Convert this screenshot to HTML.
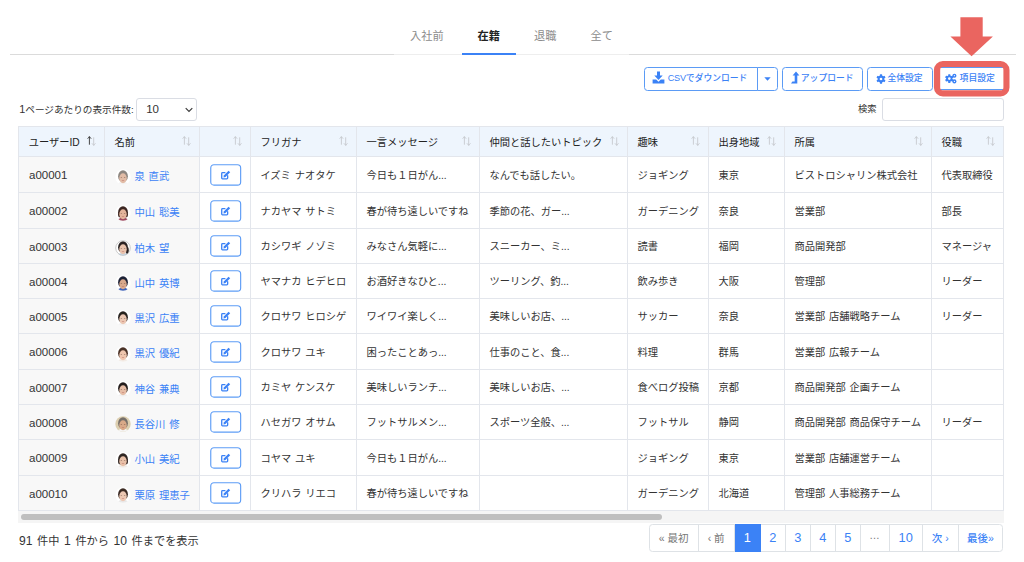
<!DOCTYPE html>
<html lang="ja">
<head>
<meta charset="utf-8">
<title>ユーザー一覧</title>
<style>
*{box-sizing:border-box;margin:0;padding:0}
html,body{width:1024px;height:562px;overflow:hidden;background:#fff}
body{font-family:"Liberation Sans","Noto Sans CJK JP",sans-serif;color:#333;font-size:10.2px;position:relative}
.abs{position:absolute}
/* tabs */
.tabline{left:10px;top:54px;width:1006px;height:1px;background:#dbdbdb}
.tab{top:27px;height:18px;line-height:18px;font-size:11.2px;color:#8c8c8c;white-space:nowrap}
.tab.on{color:#222;font-weight:700}
.tabbar{left:461.5px;top:52.5px;width:54.5px;height:2px;background:#3b82f6}
/* buttons */
.btn{top:67px;height:23.5px;border:1.2px solid #5b9bf5;border-radius:3.5px;background:#fff;color:#3b82f6;font-size:8.8px;line-height:21.9px;white-space:nowrap;font-weight:500}
.btn svg{position:absolute}
.btn>span{position:absolute;top:0}
.btn .l{font-size:9.1px;letter-spacing:-0.2px}
/* length + search */
.len{left:19.3px;top:101.5px;font-size:9.65px;color:#333;line-height:15px;white-space:nowrap}
.sel{left:136px;top:98px;width:60.8px;height:23px;border:1px solid #dadde4;border-radius:3px;font-size:11.5px;line-height:20.6px;padding-left:9.2px;color:#333}
.search-l{left:858px;top:102px;font-size:9.3px;line-height:15px}
.search-i{left:882px;top:98.2px;width:122px;height:22.4px;border:1px solid #dadde4;border-radius:3px}
/* table */
table{position:absolute;left:18px;top:126px;border-collapse:collapse;table-layout:fixed;width:985.7px}
th,td{border:1px solid #e3e6ec;padding:0 0 0.4px 9.7px;text-align:left;font-weight:400;white-space:nowrap;overflow:hidden;font-size:10.25px;color:#333;background:#fff}
th{height:30px;background:#eef5fd;color:#222;position:relative;padding-bottom:0.4px}
td{word-spacing:1px}
td.g{background:#f8f8f8}
td.id{font-size:11.5px;padding-bottom:0;padding-top:1px;padding-left:10px}
td.n{padding-left:10px;color:#3b82f6;padding-bottom:0;padding-top:3.6px;font-size:10.35px}
td.e{padding-left:10.2px;padding-bottom:0;padding-top:1px}
.sort{position:absolute;right:7.7px;top:8.9px}
.sort path{stroke:#c6cace}
.sort.asc .u{stroke:#333}
.av{vertical-align:-4.5px;margin-right:3.7px;margin-left:0}
.eb{display:block;position:relative;left:-0.15px;top:0.2px}
/* footer */
.info b{font-weight:400;font-size:12.1px}
.scroll{left:18.3px;top:511.2px;width:985.4px;height:11.4px;background:#f5f5f5}
.thumb{left:21px;top:513.6px;width:641px;height:6.6px;border-radius:4px;background:#bfbfbf}
.info{left:19px;top:532.8px;font-size:11.2px;line-height:16px;color:#333;white-space:nowrap;word-spacing:1.5px}
.pg{left:648.6px;top:524px;height:28px;border:1px solid #dee2e6;border-radius:3.5px;display:flex;font-size:10.5px;line-height:26.6px;color:#3b82f6;background:#fff;font-weight:500}
.pg span{display:block;text-align:center;border-right:1px solid #dee2e6;height:26px;white-space:nowrap}
.pg span:last-child{border-right:0}
.pg .dis{color:#777;font-weight:400}
.pg .num{font-weight:400;font-size:12.8px;line-height:26.8px}
.pg .act{background:#3b82f6;color:#fff;margin:-1px 0;height:28px;line-height:28.8px;border-right-color:#3b82f6}
</style>
</head>
<body>
<!-- tabs -->
<div class="abs tabline"></div>
<div class="abs" style="left:394px;top:54px;width:235px;height:1px;background:#eeeeee"></div>
<div class="abs tab" style="left:410px">入社前</div>
<div class="abs tab on" style="left:477.5px">在籍</div>
<div class="abs tab" style="left:534px">退職</div>
<div class="abs tab" style="left:590.5px">全て</div>
<div class="abs tabbar"></div>

<!-- red arrow -->
<svg class="abs" style="left:950px;top:17px" width="43" height="40" viewBox="0 0 43 40"><path d="M10.4 0.2H32.7V19.4H42.9L21.6 39.2L0.4 19.4H10.4Z" fill="#ea6560"/></svg>

<!-- buttons -->
<div class="abs btn" style="left:644px;width:114px;border-radius:3.5px 0 0 3.5px">
<svg style="left:7.1px;top:3.4px" width="13" height="13" viewBox="0 0 13 13"><path d="M5 0.6H8V4.6H10.7L6.5 8.9L2.3 4.6H5Z" fill="#3b82f6"/><path d="M0.6 8.6H4.2L6.5 10.8L8.8 8.6H12.4V12.4H0.6Z" fill="#3b82f6"/></svg>
<span style="left:22.7px"><span class="l">CSV</span>でダウンロード</span></div>
<div class="abs btn" style="left:756.8px;width:21px;border-radius:0 3.5px 3.5px 0"><svg style="left:6.2px;top:8.6px" width="7" height="4" viewBox="0 0 7 4"><path d="M0.3 0.3H6.7L3.5 3.7Z" fill="#3b82f6"/></svg></div>
<div class="abs btn" style="left:781.8px;width:81.2px">
<svg style="left:7.1px;top:3.1px" width="10" height="13" viewBox="0 0 10 13"><path d="M6 0.4L9.4 4.4H7.3V12.4H1L2.4 10.6H4.7V4.4H2.6Z" fill="#3b82f6"/></svg>
<span style="left:18px">アップロード</span></div>
<div class="abs btn" style="left:866.9px;width:66px">
<svg style="left:7.9px;top:5.8px" width="10" height="10" viewBox="0 0 10 10"><g fill="#3b82f6"><circle cx="5" cy="5" r="3.4"/><rect x="3.9" y="0.3" width="2.2" height="9.4" rx="0.5"/><rect x="3.9" y="0.3" width="2.2" height="9.4" rx="0.5" transform="rotate(60 5 5)"/><rect x="3.9" y="0.3" width="2.2" height="9.4" rx="0.5" transform="rotate(120 5 5)"/></g><circle cx="5" cy="5" r="1.35" fill="#fff"/></svg>
<span style="left:19.5px">全体設定</span></div>
<div class="abs btn" style="left:938.4px;width:67px;border-radius:0;height:23.2px">
<svg style="left:5.7px;top:5.1px" width="13" height="11" viewBox="0 0 13 11"><g fill="#3b82f6"><circle cx="4.3" cy="5.6" r="3.1"/><rect x="3.2" y="1.3" width="2.2" height="8.6" rx="0.5"/><rect x="3.2" y="1.3" width="2.2" height="8.6" rx="0.5" transform="rotate(60 4.3 5.6)"/><rect x="3.2" y="1.3" width="2.2" height="8.6" rx="0.5" transform="rotate(120 4.3 5.6)"/><circle cx="9.4" cy="2.7" r="2.05"/><circle cx="9.4" cy="8.4" r="2.05"/></g><circle cx="4.3" cy="5.6" r="1.3" fill="#fff"/><circle cx="9.4" cy="2.7" r="0.6" fill="#fff"/><circle cx="9.4" cy="8.4" r="0.6" fill="#fff"/></svg>
<span style="left:20.2px">項目設定</span></div>
<!-- red highlight frame -->
<svg class="abs" style="left:930px;top:58px" width="84" height="42" viewBox="0 0 84 42"><path fill="#ea6560" fill-rule="evenodd" d="M12.90 3.10H70.50A9 9 0 0 1 79.50 12.10V29.50A9 9 0 0 1 70.50 38.50H12.90A9 9 0 0 1 3.90 29.50V12.10A9 9 0 0 1 12.90 3.10ZM13.00 9.10H70.60A2.8 2.8 0 0 1 73.40 11.90V29.40A2.8 2.8 0 0 1 70.60 32.20H13.00A2.8 2.8 0 0 1 10.20 29.40V11.90A2.8 2.8 0 0 1 13.00 9.10Z"/></svg>

<!-- length / search -->
<div class="abs len"><b style="font-weight:400;font-size:10.8px">1</b>ページあたりの表示件数:</div>
<div class="abs sel">10<svg class="abs" style="right:2.4px;top:7.6px" width="8" height="6" viewBox="0 0 8 6"><path d="M0.7 1.1L4 4.5L7.3 1.1" fill="none" stroke="#3a3a3a" stroke-width="1.15"/></svg></div>
<div class="abs search-l">検索</div>
<div class="abs search-i"></div>

<table>
<colgroup><col style="width:85.7px"><col style="width:95px"><col style="width:51px"><col style="width:106px"><col style="width:123px"><col style="width:148px"><col style="width:81px"><col style="width:76px"><col style="width:147px"><col style="width:72px"></colgroup>
<thead><tr>
<th>ユーザーID<svg class="sort asc" width="9" height="10" viewBox="0 0 9 10"><g fill="none" stroke-width="0.9" stroke-linecap="round" stroke-linejoin="round"><path class="u" d="M2.4 8.3V0.8M0.9 2.4L2.4 0.7L3.9 2.4"/><path class="d" d="M6.7 1.7V9.2M5.2 7.6L6.7 9.3L8.2 7.6"/></g></svg></th>
<th>名前<svg class="sort" width="9" height="10" viewBox="0 0 9 10"><g fill="none" stroke-width="0.9" stroke-linecap="round" stroke-linejoin="round"><path class="u" d="M2.4 8.3V0.8M0.9 2.4L2.4 0.7L3.9 2.4"/><path class="d" d="M6.7 1.7V9.2M5.2 7.6L6.7 9.3L8.2 7.6"/></g></svg></th>
<th><svg class="sort" width="9" height="10" viewBox="0 0 9 10"><g fill="none" stroke-width="0.9" stroke-linecap="round" stroke-linejoin="round"><path class="u" d="M2.4 8.3V0.8M0.9 2.4L2.4 0.7L3.9 2.4"/><path class="d" d="M6.7 1.7V9.2M5.2 7.6L6.7 9.3L8.2 7.6"/></g></svg></th>
<th>フリガナ<svg class="sort" width="9" height="10" viewBox="0 0 9 10"><g fill="none" stroke-width="0.9" stroke-linecap="round" stroke-linejoin="round"><path class="u" d="M2.4 8.3V0.8M0.9 2.4L2.4 0.7L3.9 2.4"/><path class="d" d="M6.7 1.7V9.2M5.2 7.6L6.7 9.3L8.2 7.6"/></g></svg></th>
<th>一言メッセージ<svg class="sort" width="9" height="10" viewBox="0 0 9 10"><g fill="none" stroke-width="0.9" stroke-linecap="round" stroke-linejoin="round"><path class="u" d="M2.4 8.3V0.8M0.9 2.4L2.4 0.7L3.9 2.4"/><path class="d" d="M6.7 1.7V9.2M5.2 7.6L6.7 9.3L8.2 7.6"/></g></svg></th>
<th>仲間と話したいトピック<svg class="sort" width="9" height="10" viewBox="0 0 9 10"><g fill="none" stroke-width="0.9" stroke-linecap="round" stroke-linejoin="round"><path class="u" d="M2.4 8.3V0.8M0.9 2.4L2.4 0.7L3.9 2.4"/><path class="d" d="M6.7 1.7V9.2M5.2 7.6L6.7 9.3L8.2 7.6"/></g></svg></th>
<th>趣味<svg class="sort" width="9" height="10" viewBox="0 0 9 10"><g fill="none" stroke-width="0.9" stroke-linecap="round" stroke-linejoin="round"><path class="u" d="M2.4 8.3V0.8M0.9 2.4L2.4 0.7L3.9 2.4"/><path class="d" d="M6.7 1.7V9.2M5.2 7.6L6.7 9.3L8.2 7.6"/></g></svg></th>
<th>出身地域<svg class="sort" width="9" height="10" viewBox="0 0 9 10"><g fill="none" stroke-width="0.9" stroke-linecap="round" stroke-linejoin="round"><path class="u" d="M2.4 8.3V0.8M0.9 2.4L2.4 0.7L3.9 2.4"/><path class="d" d="M6.7 1.7V9.2M5.2 7.6L6.7 9.3L8.2 7.6"/></g></svg></th>
<th>所属<svg class="sort" width="9" height="10" viewBox="0 0 9 10"><g fill="none" stroke-width="0.9" stroke-linecap="round" stroke-linejoin="round"><path class="u" d="M2.4 8.3V0.8M0.9 2.4L2.4 0.7L3.9 2.4"/><path class="d" d="M6.7 1.7V9.2M5.2 7.6L6.7 9.3L8.2 7.6"/></g></svg></th>
<th>役職<svg class="sort" width="9" height="10" viewBox="0 0 9 10"><g fill="none" stroke-width="0.9" stroke-linecap="round" stroke-linejoin="round"><path class="u" d="M2.4 8.3V0.8M0.9 2.4L2.4 0.7L3.9 2.4"/><path class="d" d="M6.7 1.7V9.2M5.2 7.6L6.7 9.3L8.2 7.6"/></g></svg></th>
</tr></thead>
<tbody>
<tr style="height:36px"><td class="g id">a00001</td><td class="g n"><svg class="av" width="16" height="16" viewBox="0 0 16 16"><defs><clipPath id="c0"><circle cx="8" cy="8" r="7.7"/></clipPath><filter id="f0" x="-20%" y="-20%" width="140%" height="140%"><feGaussianBlur stdDeviation="0.35"/></filter></defs><g clip-path="url(#c0)"><rect width="16" height="16" fill="#fff"/><g filter="url(#f0)"><ellipse cx="8" cy="16.6" rx="6.4" ry="3.8" fill="#f4f4f4"/><ellipse cx="8" cy="7.2" rx="4.9" ry="5.9" fill="#8d8680"/><ellipse cx="8" cy="9.2" rx="3.7" ry="5" fill="#e2bca6"/><ellipse cx="6.3" cy="8.6" rx="0.8" ry="0.45" fill="#5a3d33" opacity=".7"/><ellipse cx="9.7" cy="8.6" rx="0.8" ry="0.45" fill="#5a3d33" opacity=".7"/><ellipse cx="8" cy="11.7" rx="1.3" ry="0.4" fill="#b0605a" opacity=".7"/></g></g></svg>泉 直武</td><td class="e"><svg class="eb" width="32" height="23" viewBox="0 0 32 23"><rect x="0.75" y="0.75" width="29.9" height="20.4" rx="3.2" fill="#fff" stroke="#5e9df6" stroke-width="1.15"/><g transform="translate(10.4 5.9) scale(1.1)"><path d="M6.6 5.3V7.4Q6.6 8.1 5.9 8.1H1.9Q1.2 8.1 1.2 7.4V3.2Q1.2 2.5 1.9 2.5H4.1" fill="none" stroke="#3b82f6" stroke-width="1.2" stroke-linecap="round"/><path d="M2.8 6.8L3.1 5L7.4 0.7L8.9 2.2L4.6 6.5Z" fill="#3b82f6"/></g></svg></td><td>イズミ ナオタケ</td><td>今日も１日がん...</td><td>なんでも話したい。</td><td>ジョギング</td><td>東京</td><td>ビストロシャリン株式会社</td><td>代表取締役</td></tr>
<tr style="height:36px"><td class="g id">a00002</td><td class="g n"><svg class="av" width="16" height="16" viewBox="0 0 16 16"><defs><clipPath id="c1"><circle cx="8" cy="8" r="7.7"/></clipPath><filter id="f1" x="-20%" y="-20%" width="140%" height="140%"><feGaussianBlur stdDeviation="0.35"/></filter></defs><g clip-path="url(#c1)"><rect width="16" height="16" fill="#fff"/><g filter="url(#f1)"><ellipse cx="8" cy="16.6" rx="6.4" ry="3.8" fill="#9c4a5e"/><rect x="3.1" y="7" width="9.8" height="5.6" rx="2.5" fill="#3b2621"/><ellipse cx="8" cy="7.2" rx="4.9" ry="5.9" fill="#3b2621"/><ellipse cx="8" cy="9.2" rx="3.7" ry="5" fill="#e4b59c"/><ellipse cx="6.3" cy="8.6" rx="0.8" ry="0.45" fill="#5a3d33" opacity=".7"/><ellipse cx="9.7" cy="8.6" rx="0.8" ry="0.45" fill="#5a3d33" opacity=".7"/><ellipse cx="8" cy="11.7" rx="1.3" ry="0.4" fill="#b0605a" opacity=".7"/></g></g></svg>中山 聡美</td><td class="e"><svg class="eb" width="32" height="23" viewBox="0 0 32 23"><rect x="0.75" y="0.75" width="29.9" height="20.4" rx="3.2" fill="#fff" stroke="#5e9df6" stroke-width="1.15"/><g transform="translate(10.4 5.9) scale(1.1)"><path d="M6.6 5.3V7.4Q6.6 8.1 5.9 8.1H1.9Q1.2 8.1 1.2 7.4V3.2Q1.2 2.5 1.9 2.5H4.1" fill="none" stroke="#3b82f6" stroke-width="1.2" stroke-linecap="round"/><path d="M2.8 6.8L3.1 5L7.4 0.7L8.9 2.2L4.6 6.5Z" fill="#3b82f6"/></g></svg></td><td>ナカヤマ サトミ</td><td>春が待ち遠しいですね</td><td>季節の花、ガー...</td><td>ガーデニング</td><td>奈良</td><td>営業部</td><td>部長</td></tr>
<tr style="height:35px"><td class="g id">a00003</td><td class="g n"><svg class="av" width="16" height="16" viewBox="0 0 16 16"><defs><clipPath id="c2"><circle cx="8" cy="8" r="7.7"/></clipPath><filter id="f2" x="-20%" y="-20%" width="140%" height="140%"><feGaussianBlur stdDeviation="0.35"/></filter></defs><g clip-path="url(#c2)"><rect width="16" height="16" fill="#fff"/><g filter="url(#f2)"><ellipse cx="8" cy="16.6" rx="6.4" ry="3.8" fill="#cfe0ee"/><ellipse cx="12.3" cy="10.5" rx="1.5" ry="3.4" fill="#2a2422"/><ellipse cx="8" cy="7.2" rx="4.9" ry="5.9" fill="#2a2422"/><ellipse cx="8" cy="9.2" rx="3.7" ry="5" fill="#e9c3ad"/><ellipse cx="6.3" cy="8.6" rx="0.8" ry="0.45" fill="#5a3d33" opacity=".7"/><ellipse cx="9.7" cy="8.6" rx="0.8" ry="0.45" fill="#5a3d33" opacity=".7"/><ellipse cx="8" cy="11.7" rx="1.3" ry="0.4" fill="#b0605a" opacity=".7"/></g></g><circle cx="8" cy="8" r="7.3" fill="none" stroke="#b5b5b5" stroke-width="0.7"/></svg>柏木 望</td><td class="e"><svg class="eb" width="32" height="23" viewBox="0 0 32 23"><rect x="0.75" y="0.75" width="29.9" height="20.4" rx="3.2" fill="#fff" stroke="#5e9df6" stroke-width="1.15"/><g transform="translate(10.4 5.9) scale(1.1)"><path d="M6.6 5.3V7.4Q6.6 8.1 5.9 8.1H1.9Q1.2 8.1 1.2 7.4V3.2Q1.2 2.5 1.9 2.5H4.1" fill="none" stroke="#3b82f6" stroke-width="1.2" stroke-linecap="round"/><path d="M2.8 6.8L3.1 5L7.4 0.7L8.9 2.2L4.6 6.5Z" fill="#3b82f6"/></g></svg></td><td>カシワギ ノゾミ</td><td>みなさん気軽に...</td><td>スニーカー、ミ...</td><td>読書</td><td>福岡</td><td>商品開発部</td><td>マネージャ</td></tr>
<tr style="height:35px"><td class="g id">a00004</td><td class="g n"><svg class="av" width="16" height="16" viewBox="0 0 16 16"><defs><clipPath id="c3"><circle cx="8" cy="8" r="7.7"/></clipPath><filter id="f3" x="-20%" y="-20%" width="140%" height="140%"><feGaussianBlur stdDeviation="0.35"/></filter></defs><g clip-path="url(#c3)"><rect width="16" height="16" fill="#fff"/><g filter="url(#f3)"><ellipse cx="8" cy="16.6" rx="6.4" ry="3.8" fill="#3f63b8"/><ellipse cx="8" cy="7.2" rx="4.9" ry="5.9" fill="#1f2236"/><ellipse cx="8" cy="9.2" rx="3.7" ry="5" fill="#d9a98c"/><ellipse cx="6.3" cy="8.6" rx="0.8" ry="0.45" fill="#5a3d33" opacity=".7"/><ellipse cx="9.7" cy="8.6" rx="0.8" ry="0.45" fill="#5a3d33" opacity=".7"/><ellipse cx="8" cy="11.7" rx="1.3" ry="0.4" fill="#b0605a" opacity=".7"/></g></g></svg>山中 英博</td><td class="e"><svg class="eb" width="32" height="23" viewBox="0 0 32 23"><rect x="0.75" y="0.75" width="29.9" height="20.4" rx="3.2" fill="#fff" stroke="#5e9df6" stroke-width="1.15"/><g transform="translate(10.4 5.9) scale(1.1)"><path d="M6.6 5.3V7.4Q6.6 8.1 5.9 8.1H1.9Q1.2 8.1 1.2 7.4V3.2Q1.2 2.5 1.9 2.5H4.1" fill="none" stroke="#3b82f6" stroke-width="1.2" stroke-linecap="round"/><path d="M2.8 6.8L3.1 5L7.4 0.7L8.9 2.2L4.6 6.5Z" fill="#3b82f6"/></g></svg></td><td>ヤマナカ ヒデヒロ</td><td>お酒好きなひと...</td><td>ツーリング、釣...</td><td>飲み歩き</td><td>大阪</td><td>管理部</td><td>リーダー</td></tr>
<tr style="height:35px"><td class="g id">a00005</td><td class="g n"><svg class="av" width="16" height="16" viewBox="0 0 16 16"><defs><clipPath id="c4"><circle cx="8" cy="8" r="7.7"/></clipPath><filter id="f4" x="-20%" y="-20%" width="140%" height="140%"><feGaussianBlur stdDeviation="0.35"/></filter></defs><g clip-path="url(#c4)"><rect width="16" height="16" fill="#fff"/><g filter="url(#f4)"><ellipse cx="8" cy="16.6" rx="6.4" ry="3.8" fill="#f2f2f2"/><ellipse cx="8" cy="7.2" rx="4.9" ry="5.9" fill="#26201f"/><ellipse cx="8" cy="9.2" rx="3.7" ry="5" fill="#ecc7b2"/><ellipse cx="6.3" cy="8.6" rx="0.8" ry="0.45" fill="#5a3d33" opacity=".7"/><ellipse cx="9.7" cy="8.6" rx="0.8" ry="0.45" fill="#5a3d33" opacity=".7"/><ellipse cx="8" cy="11.7" rx="1.3" ry="0.4" fill="#b0605a" opacity=".7"/></g></g></svg>黒沢 広重</td><td class="e"><svg class="eb" width="32" height="23" viewBox="0 0 32 23"><rect x="0.75" y="0.75" width="29.9" height="20.4" rx="3.2" fill="#fff" stroke="#5e9df6" stroke-width="1.15"/><g transform="translate(10.4 5.9) scale(1.1)"><path d="M6.6 5.3V7.4Q6.6 8.1 5.9 8.1H1.9Q1.2 8.1 1.2 7.4V3.2Q1.2 2.5 1.9 2.5H4.1" fill="none" stroke="#3b82f6" stroke-width="1.2" stroke-linecap="round"/><path d="M2.8 6.8L3.1 5L7.4 0.7L8.9 2.2L4.6 6.5Z" fill="#3b82f6"/></g></svg></td><td>クロサワ ヒロシゲ</td><td>ワイワイ楽しく...</td><td>美味しいお店、...</td><td>サッカー</td><td>奈良</td><td>営業部 店舗戦略チーム</td><td>リーダー</td></tr>
<tr style="height:36px"><td class="g id">a00006</td><td class="g n"><svg class="av" width="16" height="16" viewBox="0 0 16 16"><defs><clipPath id="c5"><circle cx="8" cy="8" r="7.7"/></clipPath><filter id="f5" x="-20%" y="-20%" width="140%" height="140%"><feGaussianBlur stdDeviation="0.35"/></filter></defs><g clip-path="url(#c5)"><rect width="16" height="16" fill="#fff"/><g filter="url(#f5)"><ellipse cx="8" cy="16.6" rx="6.4" ry="3.8" fill="#f3ece6"/><ellipse cx="8" cy="7.2" rx="4.9" ry="5.9" fill="#4a3128"/><ellipse cx="8" cy="9.2" rx="3.7" ry="5" fill="#efc6ae"/><ellipse cx="6.3" cy="8.6" rx="0.8" ry="0.45" fill="#5a3d33" opacity=".7"/><ellipse cx="9.7" cy="8.6" rx="0.8" ry="0.45" fill="#5a3d33" opacity=".7"/><ellipse cx="8" cy="11.7" rx="1.3" ry="0.4" fill="#b0605a" opacity=".7"/></g></g></svg>黒沢 優紀</td><td class="e"><svg class="eb" width="32" height="23" viewBox="0 0 32 23"><rect x="0.75" y="0.75" width="29.9" height="20.4" rx="3.2" fill="#fff" stroke="#5e9df6" stroke-width="1.15"/><g transform="translate(10.4 5.9) scale(1.1)"><path d="M6.6 5.3V7.4Q6.6 8.1 5.9 8.1H1.9Q1.2 8.1 1.2 7.4V3.2Q1.2 2.5 1.9 2.5H4.1" fill="none" stroke="#3b82f6" stroke-width="1.2" stroke-linecap="round"/><path d="M2.8 6.8L3.1 5L7.4 0.7L8.9 2.2L4.6 6.5Z" fill="#3b82f6"/></g></svg></td><td>クロサワ ユキ</td><td>困ったことあっ...</td><td>仕事のこと、食...</td><td>料理</td><td>群馬</td><td>営業部 広報チーム</td><td></td></tr>
<tr style="height:35px"><td class="g id">a00007</td><td class="g n"><svg class="av" width="16" height="16" viewBox="0 0 16 16"><defs><clipPath id="c6"><circle cx="8" cy="8" r="7.7"/></clipPath><filter id="f6" x="-20%" y="-20%" width="140%" height="140%"><feGaussianBlur stdDeviation="0.35"/></filter></defs><g clip-path="url(#c6)"><rect width="16" height="16" fill="#fff"/><g filter="url(#f6)"><ellipse cx="8" cy="16.6" rx="6.4" ry="3.8" fill="#f0f0f0"/><ellipse cx="8" cy="7.2" rx="4.9" ry="5.9" fill="#211d1c"/><ellipse cx="8" cy="9.2" rx="3.7" ry="5" fill="#e6bda6"/><ellipse cx="6.3" cy="8.6" rx="0.8" ry="0.45" fill="#5a3d33" opacity=".7"/><ellipse cx="9.7" cy="8.6" rx="0.8" ry="0.45" fill="#5a3d33" opacity=".7"/><ellipse cx="8" cy="11.7" rx="1.3" ry="0.4" fill="#b0605a" opacity=".7"/></g></g></svg>神谷 兼典</td><td class="e"><svg class="eb" width="32" height="23" viewBox="0 0 32 23"><rect x="0.75" y="0.75" width="29.9" height="20.4" rx="3.2" fill="#fff" stroke="#5e9df6" stroke-width="1.15"/><g transform="translate(10.4 5.9) scale(1.1)"><path d="M6.6 5.3V7.4Q6.6 8.1 5.9 8.1H1.9Q1.2 8.1 1.2 7.4V3.2Q1.2 2.5 1.9 2.5H4.1" fill="none" stroke="#3b82f6" stroke-width="1.2" stroke-linecap="round"/><path d="M2.8 6.8L3.1 5L7.4 0.7L8.9 2.2L4.6 6.5Z" fill="#3b82f6"/></g></svg></td><td>カミヤ ケンスケ</td><td>美味しいランチ...</td><td>美味しいお店、...</td><td>食べログ投稿</td><td>京都</td><td>商品開発部 企画チーム</td><td></td></tr>
<tr style="height:35px"><td class="g id">a00008</td><td class="g n"><svg class="av" width="16" height="16" viewBox="0 0 16 16"><defs><clipPath id="c7"><circle cx="8" cy="8" r="7.7"/></clipPath><filter id="f7" x="-20%" y="-20%" width="140%" height="140%"><feGaussianBlur stdDeviation="0.35"/></filter></defs><g clip-path="url(#c7)"><rect width="16" height="16" fill="#ddcfb0"/><g filter="url(#f7)"><ellipse cx="8" cy="16.6" rx="6.4" ry="3.8" fill="#f5f5f5"/><ellipse cx="8" cy="7.2" rx="4.9" ry="5.9" fill="#77706a"/><ellipse cx="8" cy="9.2" rx="3.7" ry="5" fill="#d9a988"/><ellipse cx="6.3" cy="8.6" rx="0.8" ry="0.45" fill="#5a3d33" opacity=".7"/><ellipse cx="9.7" cy="8.6" rx="0.8" ry="0.45" fill="#5a3d33" opacity=".7"/><ellipse cx="8" cy="11.7" rx="1.3" ry="0.4" fill="#b0605a" opacity=".7"/></g></g></svg>長谷川 修</td><td class="e"><svg class="eb" width="32" height="23" viewBox="0 0 32 23"><rect x="0.75" y="0.75" width="29.9" height="20.4" rx="3.2" fill="#fff" stroke="#5e9df6" stroke-width="1.15"/><g transform="translate(10.4 5.9) scale(1.1)"><path d="M6.6 5.3V7.4Q6.6 8.1 5.9 8.1H1.9Q1.2 8.1 1.2 7.4V3.2Q1.2 2.5 1.9 2.5H4.1" fill="none" stroke="#3b82f6" stroke-width="1.2" stroke-linecap="round"/><path d="M2.8 6.8L3.1 5L7.4 0.7L8.9 2.2L4.6 6.5Z" fill="#3b82f6"/></g></svg></td><td>ハセガワ オサム</td><td>フットサルメン...</td><td>スポーツ全般、...</td><td>フットサル</td><td>静岡</td><td>商品開発部 商品保守チーム</td><td>リーダー</td></tr>
<tr style="height:36px"><td class="g id">a00009</td><td class="g n"><svg class="av" width="16" height="16" viewBox="0 0 16 16"><defs><clipPath id="c8"><circle cx="8" cy="8" r="7.7"/></clipPath><filter id="f8" x="-20%" y="-20%" width="140%" height="140%"><feGaussianBlur stdDeviation="0.35"/></filter></defs><g clip-path="url(#c8)"><rect width="16" height="16" fill="#fff"/><g filter="url(#f8)"><ellipse cx="8" cy="16.6" rx="6.4" ry="3.8" fill="#efe9e4"/><rect x="3.1" y="7" width="9.8" height="5.6" rx="2.5" fill="#2f2522"/><ellipse cx="8" cy="7.2" rx="4.9" ry="5.9" fill="#2f2522"/><ellipse cx="8" cy="9.2" rx="3.7" ry="5" fill="#e8c0a8"/><ellipse cx="6.3" cy="8.6" rx="0.8" ry="0.45" fill="#5a3d33" opacity=".7"/><ellipse cx="9.7" cy="8.6" rx="0.8" ry="0.45" fill="#5a3d33" opacity=".7"/><ellipse cx="8" cy="11.7" rx="1.3" ry="0.4" fill="#b0605a" opacity=".7"/></g></g></svg>小山 美紀</td><td class="e"><svg class="eb" width="32" height="23" viewBox="0 0 32 23"><rect x="0.75" y="0.75" width="29.9" height="20.4" rx="3.2" fill="#fff" stroke="#5e9df6" stroke-width="1.15"/><g transform="translate(10.4 5.9) scale(1.1)"><path d="M6.6 5.3V7.4Q6.6 8.1 5.9 8.1H1.9Q1.2 8.1 1.2 7.4V3.2Q1.2 2.5 1.9 2.5H4.1" fill="none" stroke="#3b82f6" stroke-width="1.2" stroke-linecap="round"/><path d="M2.8 6.8L3.1 5L7.4 0.7L8.9 2.2L4.6 6.5Z" fill="#3b82f6"/></g></svg></td><td>コヤマ ユキ</td><td>今日も１日がん...</td><td></td><td>ジョギング</td><td>東京</td><td>営業部 店舗運営チーム</td><td></td></tr>
<tr style="height:35px"><td class="g id">a00010</td><td class="g n"><svg class="av" width="16" height="16" viewBox="0 0 16 16"><defs><clipPath id="c9"><circle cx="8" cy="8" r="7.7"/></clipPath><filter id="f9" x="-20%" y="-20%" width="140%" height="140%"><feGaussianBlur stdDeviation="0.35"/></filter></defs><g clip-path="url(#c9)"><rect width="16" height="16" fill="#fff"/><g filter="url(#f9)"><ellipse cx="8" cy="16.6" rx="6.4" ry="3.8" fill="#e8e8e8"/><ellipse cx="8" cy="7.2" rx="4.9" ry="5.9" fill="#3a2a24"/><ellipse cx="8" cy="9.2" rx="3.7" ry="5" fill="#edc8b3"/><ellipse cx="6.3" cy="8.6" rx="0.8" ry="0.45" fill="#5a3d33" opacity=".7"/><ellipse cx="9.7" cy="8.6" rx="0.8" ry="0.45" fill="#5a3d33" opacity=".7"/><ellipse cx="8" cy="11.7" rx="1.3" ry="0.4" fill="#b0605a" opacity=".7"/></g></g></svg>栗原 理恵子</td><td class="e"><svg class="eb" width="32" height="23" viewBox="0 0 32 23"><rect x="0.75" y="0.75" width="29.9" height="20.4" rx="3.2" fill="#fff" stroke="#5e9df6" stroke-width="1.15"/><g transform="translate(10.4 5.9) scale(1.1)"><path d="M6.6 5.3V7.4Q6.6 8.1 5.9 8.1H1.9Q1.2 8.1 1.2 7.4V3.2Q1.2 2.5 1.9 2.5H4.1" fill="none" stroke="#3b82f6" stroke-width="1.2" stroke-linecap="round"/><path d="M2.8 6.8L3.1 5L7.4 0.7L8.9 2.2L4.6 6.5Z" fill="#3b82f6"/></g></svg></td><td>クリハラ リエコ</td><td>春が待ち遠しいですね</td><td></td><td>ガーデニング</td><td>北海道</td><td>管理部 人事総務チーム</td><td></td></tr>
</tbody>
</table>

<div class="abs scroll"></div>
<div class="abs thumb"></div>
<div class="abs info"><b>91</b> 件中 <b>1</b> 件から <b>10</b> 件までを表示</div>
<div class="abs pg">
<span class="dis" style="width:49px">« 最初</span><span class="dis" style="width:36px">‹ 前</span><span class="act num" style="width:26.3px">1</span><span class="num" style="width:24.8px">2</span><span class="num" style="width:25px">3</span><span class="num" style="width:25px">4</span><span class="num" style="width:25px">5</span><span class="dis" style="width:29px"><i style="position:relative;top:-3.2px;font-style:normal;letter-spacing:0.3px">…</i></span><span class="num" style="width:33px">10</span><span style="width:36px">次 ›</span><span style="width:43.6px">最後»</span>
</div>
</body>
</html>
